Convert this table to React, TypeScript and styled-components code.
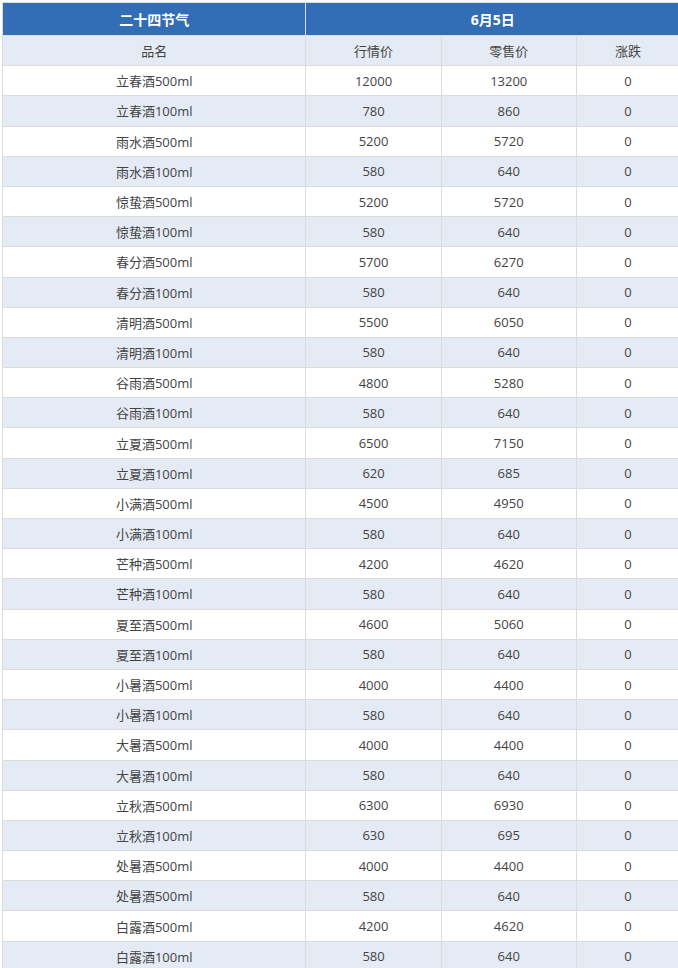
import React from 'react';
import styled, { createGlobalStyle } from 'styled-components';

const GlobalStyle = createGlobalStyle`
  html, body {
    margin: 0;
    padding: 0;
    background: #fff;
    overflow: hidden;
  }
  body {
    font-family: "Open Sans", "Noto Sans CJK SC", sans-serif;
  }
`;

const Wrapper = styled.div`
  padding: 2px 0 0 2px;
`;

const Table = styled.table`
  border-collapse: collapse;
  table-layout: fixed;
  width: 678px;
  font-size: 13px;
  color: #444;
`;

const HeadCell = styled.th`
  background: #336db5;
  color: #fff;
  font-size: 14px;
  font-weight: 700;
  height: 32px;
  padding: 0;
  border: 1px solid #dcdcdc;
  text-align: center;
`;

const Row = styled.tr<{ $alt?: boolean }>`
  background: ${(p) => (p.$alt ? '#e4ebf5' : '#fff')};
`;

const Cell = styled.td`
  height: 29.2px;
  padding: 0;
  border: 1px solid #dcdcdc;
  text-align: center;
  vertical-align: middle;
  font-weight: 400;
`;

type Item = [string, number, number];

const rows: Item[] = [
  ['立春酒500ml', 12000, 13200],
  ['立春酒100ml', 780, 860],
  ['雨水酒500ml', 5200, 5720],
  ['雨水酒100ml', 580, 640],
  ['惊蛰酒500ml', 5200, 5720],
  ['惊蛰酒100ml', 580, 640],
  ['春分酒500ml', 5700, 6270],
  ['春分酒100ml', 580, 640],
  ['清明酒500ml', 5500, 6050],
  ['清明酒100ml', 580, 640],
  ['谷雨酒500ml', 4800, 5280],
  ['谷雨酒100ml', 580, 640],
  ['立夏酒500ml', 6500, 7150],
  ['立夏酒100ml', 620, 685],
  ['小满酒500ml', 4500, 4950],
  ['小满酒100ml', 580, 640],
  ['芒种酒500ml', 4200, 4620],
  ['芒种酒100ml', 580, 640],
  ['夏至酒500ml', 4600, 5060],
  ['夏至酒100ml', 580, 640],
  ['小暑酒500ml', 4000, 4400],
  ['小暑酒100ml', 580, 640],
  ['大暑酒500ml', 4000, 4400],
  ['大暑酒100ml', 580, 640],
  ['立秋酒500ml', 6300, 6930],
  ['立秋酒100ml', 630, 695],
  ['处暑酒500ml', 4000, 4400],
  ['处暑酒500ml', 580, 640],
  ['白露酒500ml', 4200, 4620],
  ['白露酒100ml', 580, 640],
];

export default function App() {
  return (
    <Wrapper>
      <GlobalStyle />
      <Table>
        <colgroup>
          <col style={{ width: 303 }} />
          <col style={{ width: 135 }} />
          <col style={{ width: 135 }} />
          <col style={{ width: 103 }} />
        </colgroup>
        <thead>
          <tr>
            <HeadCell>二十四节气</HeadCell>
            <HeadCell colSpan={3}>6月5日</HeadCell>
          </tr>
        </thead>
        <tbody>
          <Row $alt>
            <Cell>品名</Cell>
            <Cell>行情价</Cell>
            <Cell>零售价</Cell>
            <Cell>涨跌</Cell>
          </Row>
          {rows.map(([name, market, retail], i) => (
            <Row key={i} $alt={i % 2 === 1}>
              <Cell>{name}</Cell>
              <Cell>{market}</Cell>
              <Cell>{retail}</Cell>
              <Cell>0</Cell>
            </Row>
          ))}
        </tbody>
      </Table>
    </Wrapper>
  );
}
